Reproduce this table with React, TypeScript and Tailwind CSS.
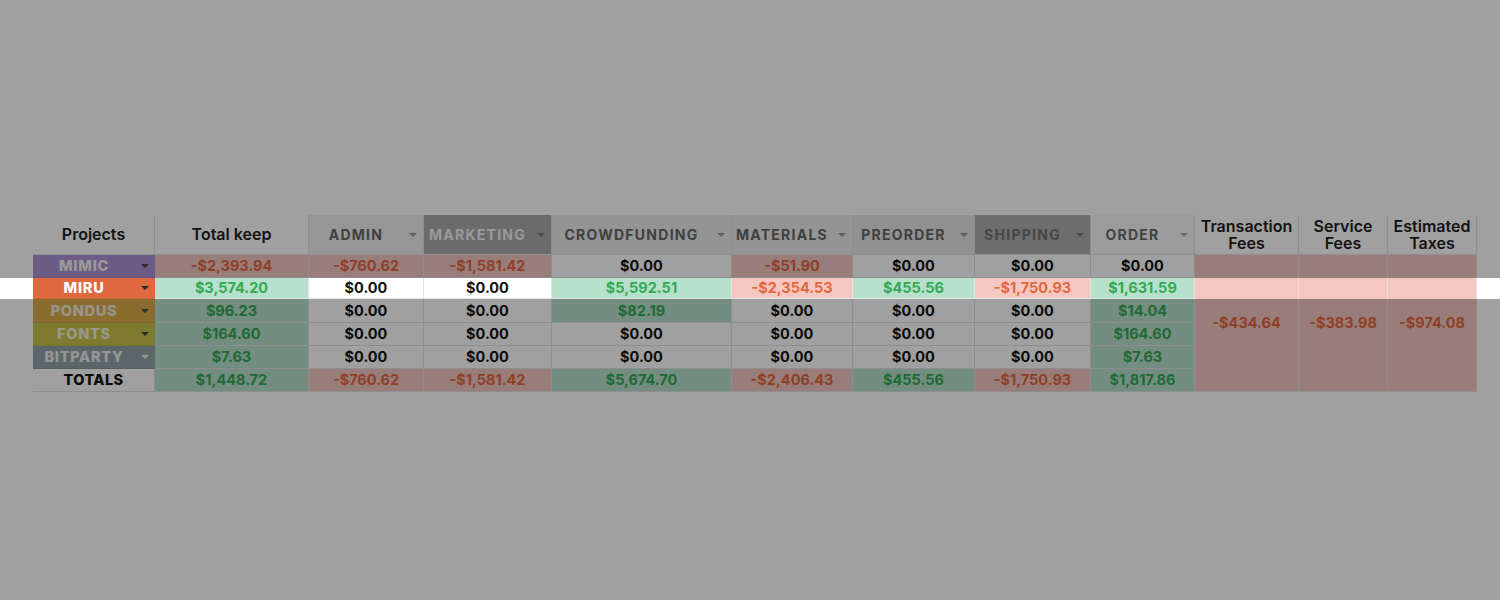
import React from "react";

type Kind = "g" | "r" | "n";

const cellKind: Record<Kind, string> = {
  g: "bg-[#b7e1cd] text-[#34a853]",
  r: "bg-[#f4c7c3] text-[#e3673e]",
  n: "bg-white text-[#111111]",
};

const headers = [
  { label: "ADMIN", cls: "bg-[#f0f0f0] text-[#666666]", arrow: "border-t-[#9a9a9a]" },
  { label: "MARKETING", cls: "bg-[#ababab] text-[#f4f4f4]", arrow: "border-t-[#7a7a7a]" },
  { label: "CROWDFUNDING", cls: "bg-[#ececec] text-[#666666]", arrow: "border-t-[#9a9a9a]" },
  { label: "MATERIALS", cls: "bg-[#ececec] text-[#666666]", arrow: "border-t-[#9a9a9a]" },
  { label: "PREORDER", cls: "bg-[#e6e6e6] text-[#666666]", arrow: "border-t-[#9a9a9a]" },
  { label: "SHIPPING", cls: "bg-[#b0b0b0] text-[#6e6e6e]", arrow: "border-t-[#7a7a7a]" },
  { label: "ORDER", cls: "bg-[#f8f8f8] text-[#6a6a6a]", arrow: "border-t-[#a8a8a8]" },
];

type Row = {
  name: string;
  cls: string;
  arrow: string;
  vals: [string, Kind][];
};

const rows: Row[] = [
  {
    name: "MIMIC",
    cls: "bg-[#a993d3] text-[#f4f4f4]",
    arrow: "border-t-[#444444]",
    vals: [
      ["-$2,393.94", "r"],
      ["-$760.62", "r"],
      ["-$1,581.42", "r"],
      ["$0.00", "n"],
      ["-$51.90", "r"],
      ["$0.00", "n"],
      ["$0.00", "n"],
      ["$0.00", "n"],
    ],
  },
  {
    name: "MIRU",
    cls: "bg-[#e0683f] text-white",
    arrow: "border-t-[#2a2a2a]",
    vals: [
      ["$3,574.20", "g"],
      ["$0.00", "n"],
      ["$0.00", "n"],
      ["$5,592.51", "g"],
      ["-$2,354.53", "r"],
      ["$455.56", "g"],
      ["-$1,750.93", "r"],
      ["$1,631.59", "g"],
    ],
  },
  {
    name: "PONDUS",
    cls: "bg-[#dcad4b] text-[#f6eee0]",
    arrow: "border-t-[#444444]",
    vals: [
      ["$96.23", "g"],
      ["$0.00", "n"],
      ["$0.00", "n"],
      ["$82.19", "g"],
      ["$0.00", "n"],
      ["$0.00", "n"],
      ["$0.00", "n"],
      ["$14.04", "g"],
    ],
  },
  {
    name: "FONTS",
    cls: "bg-[#c9c34d] text-[#f6f2e0]",
    arrow: "border-t-[#444444]",
    vals: [
      ["$164.60", "g"],
      ["$0.00", "n"],
      ["$0.00", "n"],
      ["$0.00", "n"],
      ["$0.00", "n"],
      ["$0.00", "n"],
      ["$0.00", "n"],
      ["$164.60", "g"],
    ],
  },
  {
    name: "BITPARTY",
    cls: "bg-[#91a3a8] text-[#f0f0f0]",
    arrow: "border-t-[#eeeeee]",
    vals: [
      ["$7.63", "g"],
      ["$0.00", "n"],
      ["$0.00", "n"],
      ["$0.00", "n"],
      ["$0.00", "n"],
      ["$0.00", "n"],
      ["$0.00", "n"],
      ["$7.63", "g"],
    ],
  },
];

const totals: [string, Kind][] = [
  ["$1,448.72", "g"],
  ["-$760.62", "r"],
  ["-$1,581.42", "r"],
  ["$5,674.70", "g"],
  ["-$2,406.43", "r"],
  ["$455.56", "g"],
  ["-$1,750.93", "r"],
  ["$1,817.86", "g"],
];

const line = "border-r border-b border-[#e3e3e3]";

function Arrow({ color }: { color: string }) {
  return (
    <span className="flex w-[20px] shrink-0 justify-center">
      <span
        className={`h-0 w-0 border-x-[4px] border-t-[4px] border-x-transparent ${color}`}
      />
    </span>
  );
}

function TitleHead({ children }: { children: React.ReactNode }) {
  return (
    <div
      className={`flex items-center justify-center bg-white text-center text-[16px] font-semibold leading-[17px] text-[#1e1e1e] ${line}`}
    >
      {children}
    </div>
  );
}

function Num({ v, k }: { v: string; k: Kind }) {
  return (
    <div
      className={`flex items-center justify-center text-[14.5px] font-bold ${cellKind[k]} ${line}`}
    >
      {v}
    </div>
  );
}

export default function App() {
  return (
    <div className="relative h-[600px] w-[1500px] overflow-hidden bg-white font-['Inter','Noto_Sans',sans-serif]">
      <div className="pl-[33px] pt-[215px]">
        <div className="grid grid-cols-[122px_154px_115px_128px_180px_121px_122px_116px_104px_104px_89px_89px] grid-rows-[40px_23px_21px_24px_23px_23px_23px]">
          <TitleHead>Projects</TitleHead>
          <TitleHead>Total keep</TitleHead>
          {headers.map((h) => (
            <div
              key={h.label}
              className={`flex items-center text-[14px] font-bold tracking-[0.09em] ${h.cls} ${line}`}
            >
              <span className="flex-1 text-center">{h.label}</span>
              <Arrow color={h.arrow} />
            </div>
          ))}
          <TitleHead>
            Transaction
            <br />
            Fees
          </TitleHead>
          <TitleHead>
            Service
            <br />
            Fees
          </TitleHead>
          <TitleHead>
            Estimated
            <br />
            Taxes
          </TitleHead>

          {rows.map((r, i) => (
            <React.Fragment key={r.name}>
              <div
                className={`flex items-center text-[14.5px] font-extrabold tracking-[0.05em] ${r.cls} border-b border-[#00000010]`}
              >
                <span className="flex-1 text-center">{r.name}</span>
                <Arrow color={r.arrow} />
              </div>
              {r.vals.map(([v, k], j) => (
                <Num key={j} v={v} k={k} />
              ))}
              {i === 0 && (
                <>
                  <div
                    className={`row-span-6 flex items-center justify-center bg-[#f4c7c3] text-[14.5px] font-bold text-[#e3673e] ${line}`}
                  >
                    -$434.64
                  </div>
                  <div
                    className={`row-span-6 flex items-center justify-center bg-[#f4c7c3] text-[14.5px] font-bold text-[#e3673e] ${line}`}
                  >
                    -$383.98
                  </div>
                  <div
                    className={`row-span-6 flex items-center justify-center bg-[#f4c7c3] text-[14.5px] font-bold text-[#e3673e] ${line}`}
                  >
                    -$974.08
                  </div>
                </>
              )}
            </React.Fragment>
          ))}

          <div
            className={`flex items-center justify-center bg-white text-[14.5px] font-extrabold tracking-[0.03em] text-[#111111] ${line}`}
          >
            TOTALS
          </div>
          {totals.map(([v, k], j) => (
            <Num key={j} v={v} k={k} />
          ))}
        </div>
      </div>

      {/* spotlight dimming overlays */}
      <div className="pointer-events-none absolute left-0 right-0 top-0 h-[278px] bg-black/[0.373]" />
      <div className="pointer-events-none absolute bottom-0 left-0 right-0 top-[299px] bg-black/[0.373]" />
    </div>
  );
}
